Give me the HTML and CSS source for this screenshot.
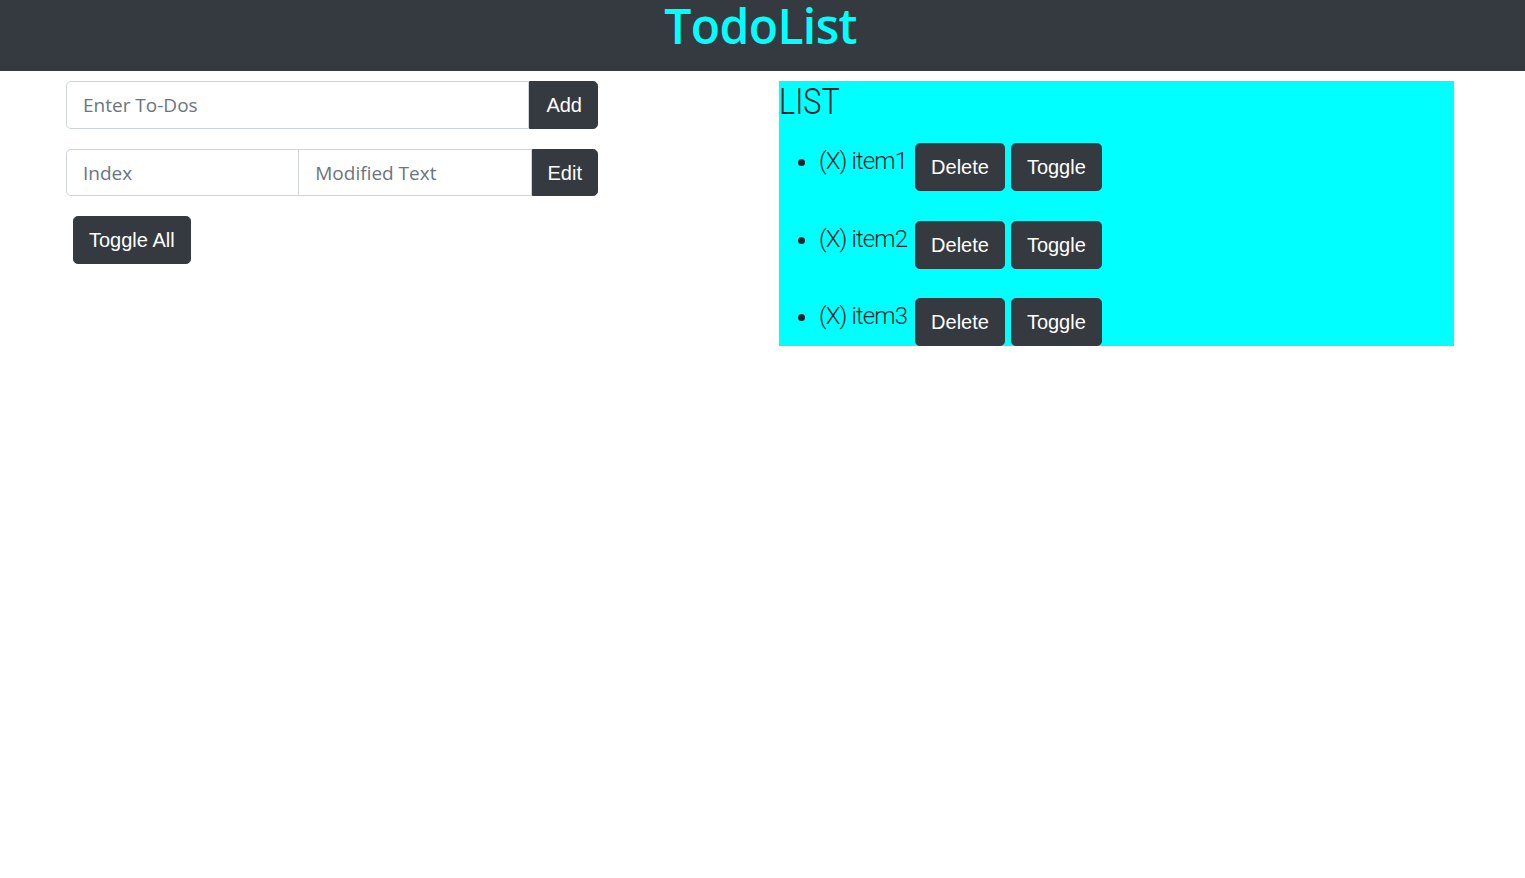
FILE: index.html
```html
<!DOCTYPE html>
<html>
<head>
<meta charset="utf-8">
<link rel="stylesheet" href="styles.css">
</head>
<body>
<header class="topbar"><h1 class="title">TodoList</h1></header>
<main class="layout">
  <section class="controls">
    <div class="input-group">
      <input class="field" type="text" placeholder="Enter To-Dos">
      <button class="btn btn-append">Add</button>
    </div>
    <div class="input-group">
      <input class="field" type="text" placeholder="Index">
      <input class="field field-mid" type="text" placeholder="Modified Text">
      <button class="btn btn-append btn-edit">Edit</button>
    </div>
    <div class="toggle-row"><button class="btn">Toggle All</button></div>
  </section>
  <section class="list-box">
    <h2 class="list-title"><span class="list-title-text">LIST</span></h2>
    <ul class="items">
      <li class="item"><div class="item-row"><span class="item-text">(X) item1</span><button class="btn">Delete</button><button class="btn">Toggle</button></div></li>
      <li class="item"><div class="item-row"><span class="item-text">(X) item2</span><button class="btn">Delete</button><button class="btn">Toggle</button></div></li>
      <li class="item"><div class="item-row"><span class="item-text">(X) item3</span><button class="btn">Delete</button><button class="btn">Toggle</button></div></li>
    </ul>
  </section>
</main>
</body>
</html>
```
FILE: styles.css
```css
* { box-sizing: border-box; }
html, body { margin: 0; padding: 0; background: #fff; }
body { font-family: "Open Sans", "Noto Sans", sans-serif; color: #212529; }

.topbar {
  background: #343a40;
  height: 71px;
  display: flex;
  justify-content: center;
  align-items: flex-start;
  padding-top: 2px;
}
.title {
  margin: 0 0 0 -4px;
  color: #00ffff;
  font-family: "Open Sans", sans-serif;
  font-weight: 600;
  font-size: 48px;
  line-height: 48px;
  letter-spacing: -0.6px;
}

.layout {
  display: grid;
  grid-template-columns: 532px 675px;
  column-gap: 181px;
  padding-left: 66px;
  margin-top: 10px;
  align-items: start;
}

.controls { display: flex; flex-direction: column; gap: 20px; }
.input-group { display: flex; height: 48px; }
.input-group + .input-group { height: 47px; }
.field {
  flex: 1 1 0;
  min-width: 0;
  height: 100%;
  border: 1px solid #ced4da;
  border-radius: 4.8px 0 0 4.8px;
  padding: 0 16px;
  font-family: "Open Sans", "Noto Sans", sans-serif;
  font-size: 19px;
  color: #495057;
  outline: none;
}
.field::placeholder { color: #6c757d; }
.field-mid { border-radius: 0; margin-left: -1px; }

.btn {
  background: #343a40;
  border: 1px solid #343a40;
  color: #fff;
  font-family: "Liberation Sans", Arial, sans-serif;
  font-size: 20px;
  line-height: 30px;
  padding: 8px 15px;
  border-radius: 4.8px;
  cursor: pointer;
}
.btn-append {
  border-radius: 0 4.8px 4.8px 0;
  height: 100%;
  padding: 0 15px 0 16px;
  flex: none;
}
.btn-edit { padding: 0 15px; }
.toggle-row { padding-left: 7px; }
.toggle-row .btn { padding: 8px 15px; }

.list-box {
  background: #00ffff;
  height: 265px;
}
.list-title {
  margin: 0;
  font-family: Roboto, sans-serif;
  font-weight: 300;
  font-size: 36px;
  line-height: 43px;
  color: #212529;
}
.list-title-text {
  display: inline-block;
  transform: scaleX(0.85);
  transform-origin: left center;
}
.items {
  margin: 19px 0 0;
  padding-left: 40px;
  font-family: Roboto, sans-serif;
  font-weight: 300;
  font-size: 24px;
  line-height: 36px;
}
.item { margin-bottom: 29.5px; }
.item:last-child { margin-bottom: 0; }
.item-row { display: flex; align-items: flex-start; }
.item-text { margin-right: 8px; letter-spacing: -0.9px; }
.item-row .btn { margin-right: 6px; padding: 8px 15px; }
```
